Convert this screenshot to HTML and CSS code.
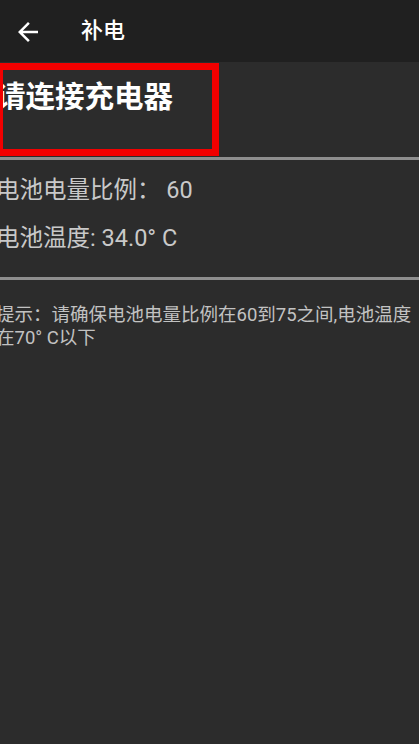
FILE: index.html
```html
<!DOCTYPE html>
<html lang="zh">
<head>
<meta charset="utf-8">
<title>补电</title>
<link rel="stylesheet" href="styles.css">
</head>
<body>
<header class="appbar">
  <svg class="back" viewBox="0 0 24 24" width="30" height="30" aria-hidden="true">
    <path d="M20 11H7.83l5.59-5.59L12 4l-8 8 8 8 1.41-1.41L7.83 13H20v-2z" fill="#ffffff"/>
  </svg>
  <span class="appbar-title">补电</span>
</header>
<main class="content">
  <section class="title-block">
    <h1 class="title">请连接充电器</h1>
    <div class="highlight"></div>
  </section>
  <hr class="divider">
  <section class="stats">
    <div class="row">电池电量比例： 60</div>
    <div class="row">电池温度: 34.0° C</div>
  </section>
  <hr class="divider">
  <p class="hint">提示：请确保电池电量比例在60到75之间,电池温度在70° C以下</p>
</main>
</body>
</html>
```

FILE: styles.css
```css
html, body {
  margin: 0;
  padding: 0;
  background: #2c2c2c;
  overflow: hidden;
}
body {
  width: 419px;
  height: 744px;
  font-family: Roboto, "Noto Sans CJK SC", sans-serif;
}
.appbar {
  height: 62px;
  background: #202020;
  display: flex;
  align-items: center;
}
.back {
  display: block;
  margin-left: 13px;
  margin-top: 1px;
}
.appbar-title {
  margin-left: 38px;
  color: #ffffff;
  font-size: 22px;
  font-weight: 500;
  line-height: 24px;
}
.content {
  margin-left: -4px;
}
.title-block {
  position: relative;
  height: 95px;
  padding-top: 16px;
  box-sizing: border-box;
}
.title {
  margin: 0;
  color: #ffffff;
  font-size: 29.5px;
  font-weight: 700;
  line-height: 38px;
}
.highlight {
  position: absolute;
  left: 0;
  top: 1px;
  width: 223px;
  height: 93px;
  box-sizing: border-box;
  border: 7px solid #f20000;
}
.divider {
  margin: 0;
  border: 0;
  height: 3px;
  background: #8e8e8e;
}
.stats {
  padding: 6px 0 15px;
}
.row {
  color: #c9c9c9;
  font-size: 23.5px;
  line-height: 48px;
}
.hint {
  margin: 0;
  padding-top: 24px;
  color: #c2c2c2;
  font-size: 18.5px;
  line-height: 23px;
}
```
